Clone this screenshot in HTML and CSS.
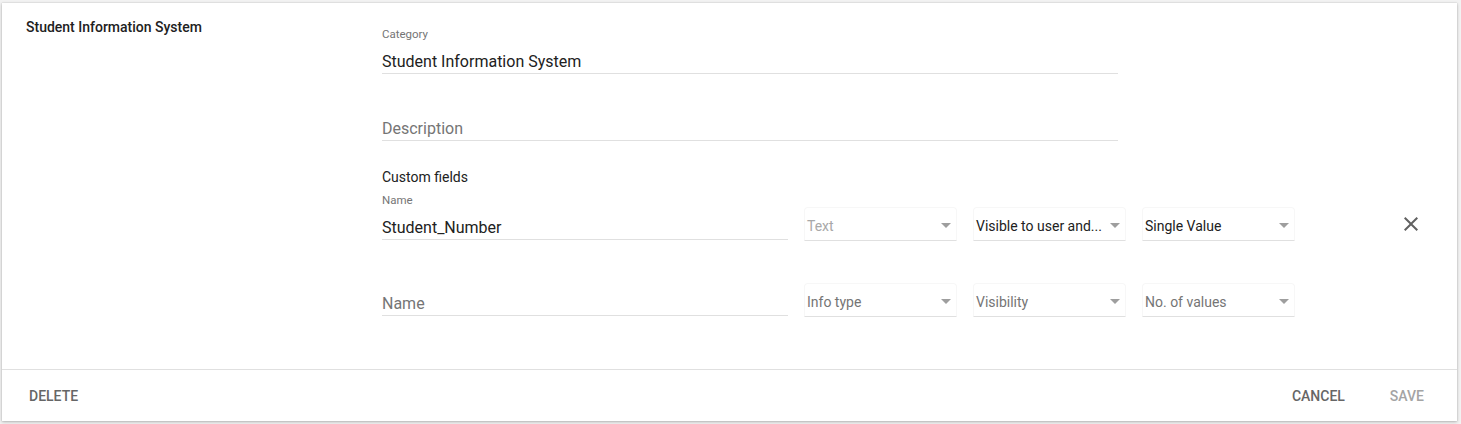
FILE: index.html
```html
<!DOCTYPE html>
<html>
<head>
<meta charset="utf-8">
<link rel="stylesheet" href="styles.css">
</head>
<body>
<div class="card">
  <div class="main">
    <div class="side">
      <div class="side-title">Student Information System</div>
    </div>
    <div class="form">
      <div class="field wide">
        <div class="label">Category</div>
        <div class="input value">Student Information System</div>
      </div>
      <div class="field wide desc">
        <div class="label"></div>
        <div class="input placeholder">Description</div>
      </div>
      <div class="section-title">Custom fields</div>
      <div class="cf-row first">
        <div class="field name">
          <div class="label">Name</div>
          <div class="input value">Student_Number</div>
        </div>
        <div class="select disabled"><span class="sel-text">Text</span><span class="arrow"></span></div>
        <div class="select"><span class="sel-text dark">Visible to user and...</span><span class="arrow"></span></div>
        <div class="select"><span class="sel-text dark">Single Value</span><span class="arrow"></span></div>
        <div class="action">
          <svg class="close" width="24" height="24" viewBox="0 0 24 24"><path d="M19 6.41L17.59 5 12 10.59 6.41 5 5 6.41 10.59 12 5 17.59 6.41 19 12 13.41 17.59 19 19 17.59 13.41 12z" fill="#616161"/></svg>
        </div>
      </div>
      <div class="cf-row second">
        <div class="field name">
          <div class="label"></div>
          <div class="input placeholder">Name</div>
        </div>
        <div class="select"><span class="sel-text">Info type</span><span class="arrow"></span></div>
        <div class="select"><span class="sel-text">Visibility</span><span class="arrow"></span></div>
        <div class="select"><span class="sel-text">No. of values</span><span class="arrow"></span></div>
        <div class="action"></div>
      </div>
    </div>
  </div>
  <div class="footer">
    <span class="btn">DELETE</span>
    <span class="spacer"></span>
    <span class="btn">CANCEL</span>
    <span class="btn disabled-btn">SAVE</span>
  </div>
</div>
</body>
</html>
```
FILE: styles.css
```css
html, body {
  margin: 0;
  padding: 0;
}
body {
  background: #f2f2f2;
  font-family: Roboto, "Liberation Sans", sans-serif;
  color: #212121;
  padding: 3px 4px 3px 2px;
}
.card {
  background: #fff;
  width: 1455px;
  height: 418px;
  box-shadow: 0 1px 3px rgba(0,0,0,0.25), 0 0 1px rgba(0,0,0,0.2);
  display: flex;
  flex-direction: column;
}
.main {
  display: flex;
  height: 366px;
}
.side {
  width: 356px;
  padding-left: 24px;
  padding-top: 16px;
}
.side-title {
  font-size: 14px;
  font-weight: 500;
  line-height: 17px;
  color: #212121;
}
.form {
  padding-top: 23px;
  display: flex;
  flex-direction: column;
}
.field {
  display: flex;
  flex-direction: column;
}
.field.wide {
  width: 736px;
}
.field.desc {
  margin-top: 19px;
}
.label {
  font-size: 11.5px;
  line-height: 16px;
  height: 16px;
  color: #757575;
  margin-bottom: 7px;
}
.input {
  height: 22px;
  padding-top: 2px;
  line-height: 22px;
  font-size: 16px;
  border-bottom: 1px solid #e0e0e0;
}
.value {
  color: #212121;
}
.placeholder {
  color: #757575;
}
.section-title {
  margin-top: 26px;
  font-size: 14px;
  line-height: 20px;
  color: #212121;
}
.cf-row {
  display: flex;
  align-items: flex-end;
}
.cf-row.first {
  margin-top: 5px;
}
.cf-row.second {
  margin-top: 28px;
}
.field.name {
  width: 406px;
  margin-right: 16px;
}
.select {
  width: 150px;
  height: 29px;
  padding-top: 3px;
  margin-right: 16px;
  border: 1px solid #f7f7f7;
  border-bottom-color: #e0e0e0;
  border-radius: 4px 4px 0 0;
  display: flex;
  align-items: center;
  padding-left: 1px;
  box-sizing: content-box;
  margin-bottom: -1px;
}
.sel-text {
  flex: 1;
  font-size: 14px;
  color: #757575;
  white-space: nowrap;
  padding-left: 1px;
}
.sel-text.dark {
  color: #212121;
}
.select.disabled .sel-text {
  color: #a8a8a8;
}
.arrow {
  width: 0;
  height: 0;
  border-left: 5px solid transparent;
  border-right: 5px solid transparent;
  border-top: 5px solid #9e9e9e;
  margin-right: 5px;
  margin-top: 0;
}
.action {
  width: 124px;
  height: 33px;
  display: flex;
  align-items: center;
  justify-content: flex-end;
}
.close {
  display: block;
  margin-right: 12px;
  margin-top: 1px;
}
.footer {
  flex: 1;
  border-top: 1px solid #e0e0e0;
  display: flex;
  align-items: center;
  padding: 0 31px 0 25px;
}
.btn {
  font-size: 14px;
  font-weight: 500;
  color: #666666;
  padding: 0 2px;
  margin-top: 1px;
}
.spacer {
  flex: 1;
}
.disabled-btn {
  color: #a4a4a4;
  margin-left: 41px;
}
```
